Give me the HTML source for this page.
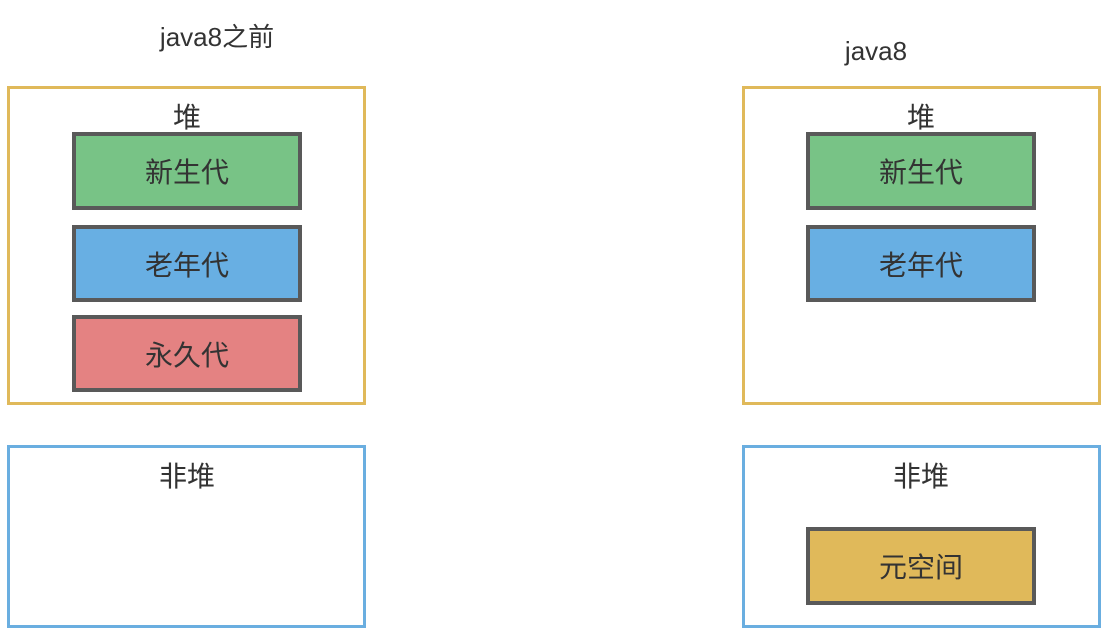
<!DOCTYPE html><html><head><meta charset="utf-8"><style>
body{margin:0;width:1112px;height:632px;background:#fff;position:relative;font-family:"Liberation Sans","Noto Sans CJK SC",sans-serif;color:#333;overflow:hidden}
.b{position:absolute;box-sizing:border-box}
.h{border:3px solid #e0b95a}
.n{border:3px solid #6aaee0}
.i{border:4px solid #595959;display:flex;align-items:center;justify-content:center;font-size:28px}
.t{position:absolute;font-size:28px;text-align:center;transform:translateX(-50%);white-space:nowrap;line-height:1}
</style></head><body>
<div class="t" style="left:217px;top:24px;font-size:26px">java8之前</div>
<div class="t" style="left:876px;top:38px;font-size:26px">java8</div>

<div class="b h" style="left:7px;top:86px;width:359px;height:319px"></div>
<div class="t" style="left:187px;top:104px">堆</div>
<div class="b i" style="left:72px;top:132px;width:230px;height:78px;background:#78c386">新生代</div>
<div class="b i" style="left:72px;top:225px;width:230px;height:77px;background:#68afe3">老年代</div>
<div class="b i" style="left:72px;top:315px;width:230px;height:77px;background:#e48282">永久代</div>
<div class="b n" style="left:7px;top:445px;width:359px;height:183px"></div>
<div class="t" style="left:187px;top:463px">非堆</div>

<div class="b h" style="left:742px;top:86px;width:359px;height:319px"></div>
<div class="t" style="left:921px;top:104px">堆</div>
<div class="b i" style="left:806px;top:132px;width:230px;height:78px;background:#78c386">新生代</div>
<div class="b i" style="left:806px;top:225px;width:230px;height:77px;background:#68afe3">老年代</div>
<div class="b n" style="left:742px;top:445px;width:359px;height:183px"></div>
<div class="t" style="left:921px;top:463px">非堆</div>
<div class="b i" style="left:806px;top:527px;width:230px;height:78px;background:#e0b95a">元空间</div>
</body></html>
